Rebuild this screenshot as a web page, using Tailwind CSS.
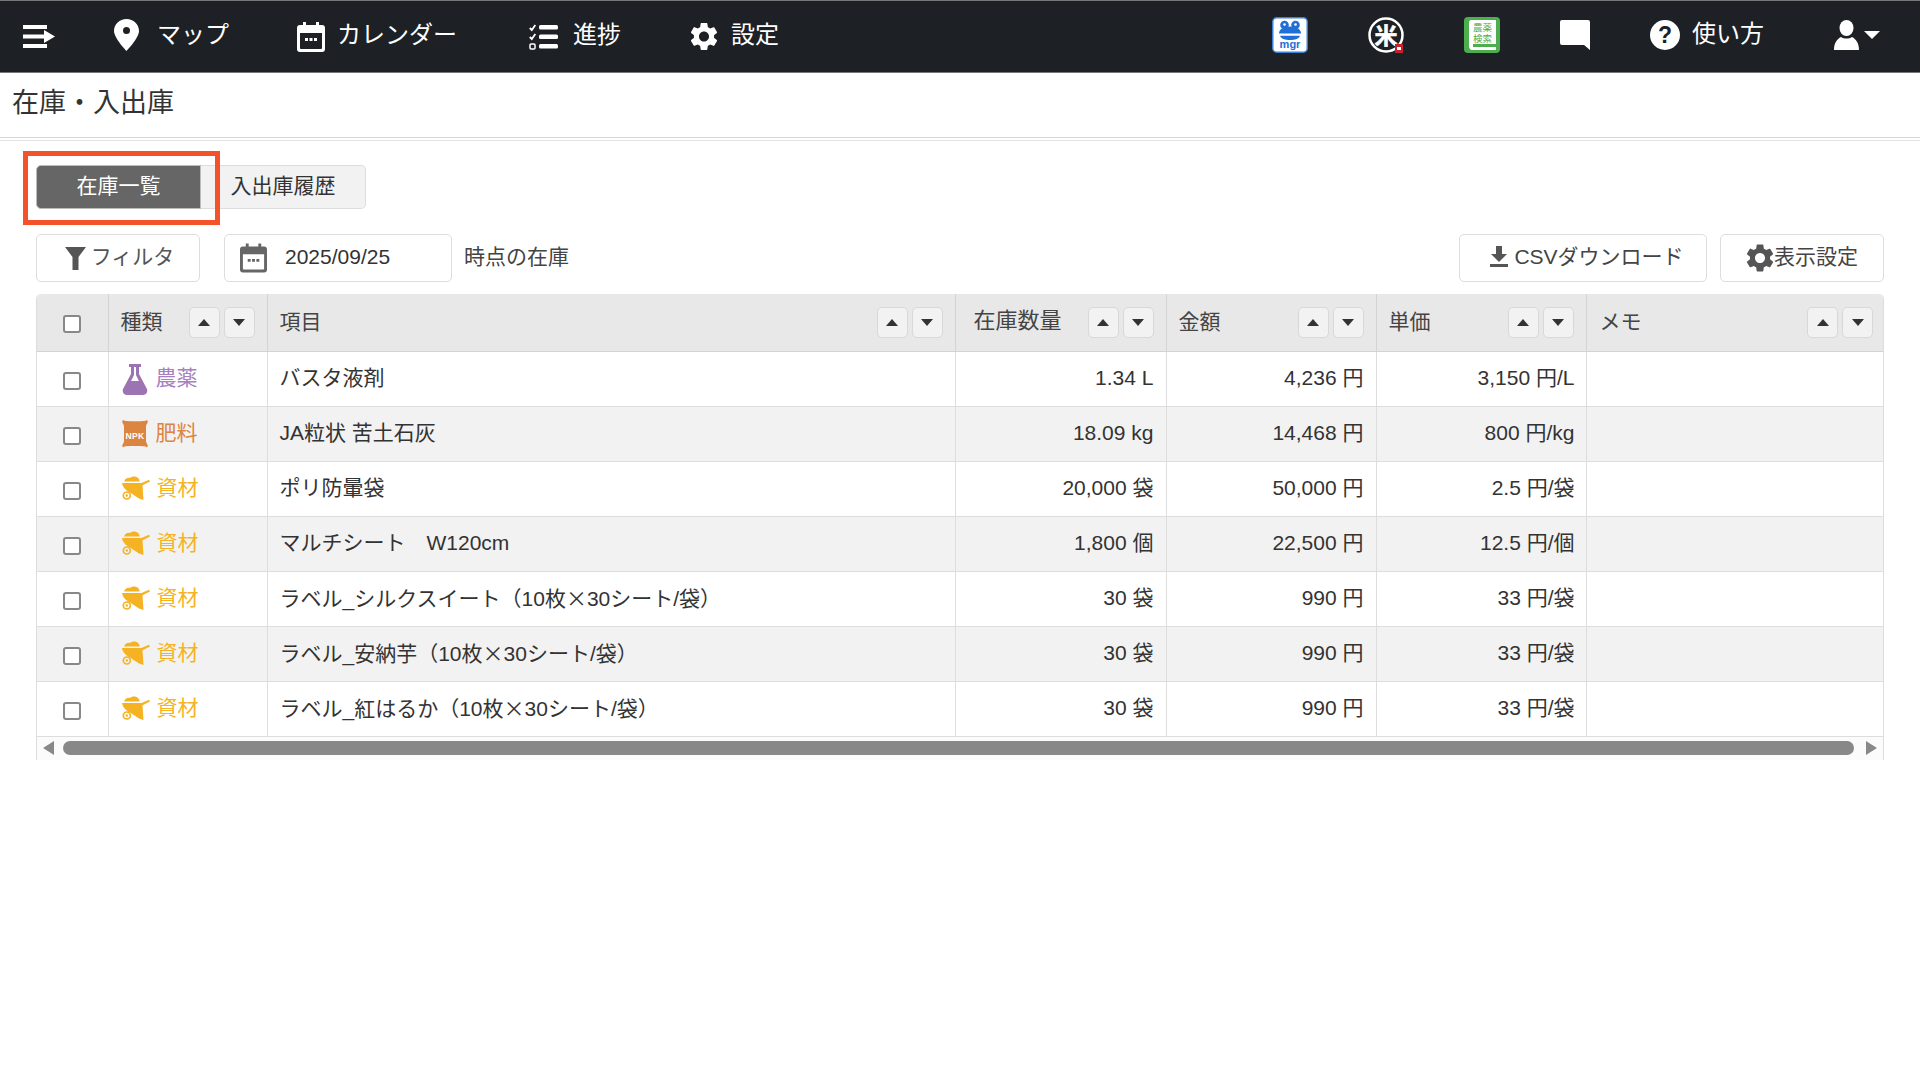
<!DOCTYPE html>
<html lang="ja">
<head>
<meta charset="utf-8">
<title>在庫・入出庫</title>
<script src="https://cdn.jsdelivr.net/npm/@tailwindcss/browser@4"></script>
</head>
<body class="relative w-[1920px] h-[1080px] overflow-hidden bg-white text-[#333] text-[21px] font-['Liberation_Sans','Noto_Sans_CJK_JP',sans-serif]">
<svg class="hidden">
  <symbol id="gear" viewBox="2 2 20 20"><path fill="currentColor" d="M19.14 12.94c.04-.3.06-.61.06-.94 0-.32-.02-.64-.07-.94l2.03-1.58c.18-.14.23-.41.12-.61l-1.92-3.32c-.12-.22-.37-.29-.59-.22l-2.39.96c-.5-.38-1.03-.7-1.62-.94l-.36-2.54c-.04-.24-.24-.41-.48-.41h-3.84c-.24 0-.43.17-.47.41l-.36 2.54c-.59.24-1.13.57-1.62.94l-2.39-.96c-.22-.08-.47 0-.59.22L2.74 8.87c-.12.21-.08.47.12.61l2.03 1.58c-.05.3-.09.63-.09.94s.02.64.07.94l-2.03 1.58c-.18.14-.23.41-.12.61l1.92 3.32c.12.22.37.29.59.22l2.39-.96c.5.38 1.03.7 1.62.94l.36 2.54c.05.24.24.41.48.41h3.84c.24 0 .44-.17.47-.41l.36-2.54c.59-.24 1.13-.56 1.62-.94l2.39.96c.22.08.47 0 .59-.22l1.92-3.32c.12-.22.07-.47-.12-.61l-2.01-1.58zM12 15.6c-1.98 0-3.6-1.62-3.6-3.6s1.62-3.6 3.6-3.6 3.6 1.62 3.6 3.6-1.62 3.6-3.6 3.6z"/></symbol>
  <symbol id="cal" viewBox="0 0 28 30"><path fill="currentColor" fill-rule="evenodd" d="M6 0h3v3h10V0h3v3h3a3 3 0 0 1 3 3v21a3 3 0 0 1-3 3H3a3 3 0 0 1-3-3V6a3 3 0 0 1 3-3h3zM3 11v15a1 1 0 0 0 1 1h20a1 1 0 0 0 1-1V11zM8 16h3v3H8zM12.500 16h3v3h-3zM17 16h3v3h-3z"/></symbol>
  <symbol id="wheel" viewBox="0 0 28 24"><path fill="currentColor" d="M2 5.500C3 2.500 6 1 8 2c2-2 6-2 8 0 1 1 1.500 2 1.500 3.500z"/><path fill="currentColor" d="M0 7h18.500l1 0L27 3.800l1 1.800-7.500 3.600L21.500 24 17 22.500 8 16.500C4 14.500 .5 11 0 7z"/><circle cx="4.800" cy="19.500" r="3.500" fill="none" stroke="currentColor" stroke-width="1.700"/><circle cx="4.800" cy="19.500" r="1.200" fill="currentColor"/></symbol>
  <symbol id="up" viewBox="0 0 12 7"><path fill="#333" d="M6 0l6 7H0z"/></symbol>
  <symbol id="down" viewBox="0 0 12 7"><path fill="#333" d="M0 0h12L6 7z"/></symbol>
</svg>

<header class="h-[73px] bg-[#1d2125] border-t border-b border-[#777] flex items-center text-white text-[24px] leading-none">
  <svg class="w-[32px] h-[23px] ml-[23px]" viewBox="0 0 32 23"><path fill="#fff" d="M0 0h24v4H0zM0 19h24v4H0z"/><path fill="#fff" d="M0 9.500h21V5l11 6.500L21 18v-4.500H0z"/></svg>
  <svg class="w-[25px] h-[32px] ml-[59px] mb-[4px]" viewBox="0 0 25 32"><path fill="#fff" fill-rule="evenodd" d="M12.500 0C5.600 0 0 5.400 0 12c0 7 12.500 20 12.500 20S25 19 25 12C25 5.400 19.400 0 12.500 0zm0 8a3.500 3.500 0 1 1 0 7 3.500 3.500 0 0 1 0-7z"/></svg>
  <span class="ml-[18px] mb-[4px]">マップ</span>
  <svg class="w-[28px] h-[30px] ml-[68px] text-white"><use href="#cal"/></svg>
  <span class="ml-[12px] mb-[4px]">カレンダー</span>
  <svg class="w-[29px] h-[26px] ml-[72px]" viewBox="0 0 29 26"><path fill="none" stroke="#fff" stroke-width="1.800" d="M.8 4l2 2 3.500-5M.8 13l2 2 3.500-5"/><rect x="1" y="20" width="5" height="5" rx="1" fill="none" stroke="#fff" stroke-width="1.500"/><rect x="10" y="1" width="19" height="4.500" rx="1.500" fill="#fff"/><rect x="10" y="10.500" width="19" height="4.500" rx="1.500" fill="#fff"/><rect x="10" y="20" width="19" height="4.500" rx="1.500" fill="#fff"/></svg>
  <span class="ml-[15px] mb-[4px]">進捗</span>
  <svg class="w-[28px] h-[29px] ml-[69px] text-white"><use href="#gear"/></svg>
  <span class="ml-[13px] mb-[4px]">設定</span>

  <div class="ml-auto flex items-center mb-[3px]">
    <svg class="w-[36px] h-[36px]" viewBox="0 0 36 36"><rect x=".75" y=".75" width="34.500" height="34.500" rx="4" fill="#fff" stroke="#3b82d6" stroke-width="1.500"/><circle cx="12.500" cy="8" r="4.300" fill="#1f6fd6"/><circle cx="23.500" cy="8" r="4.300" fill="#1f6fd6"/><circle cx="12.500" cy="7.500" r="1.300" fill="#fff"/><circle cx="23.500" cy="7.500" r="1.300" fill="#fff"/><path fill="#1f6fd6" d="M7 16.500c0-4 4-7 11-7s11 3 11 7z"/><path fill="#1f6fd6" d="M8 18.800h20c-1 3-5 4.200-10 4.200S9 21.800 8 18.800z"/><text x="18" y="30.500" font-size="11" font-weight="700" fill="#1f6fd6" text-anchor="middle" font-family="Liberation Sans">mgr</text></svg>
    <svg class="w-[36px] h-[36px] ml-[60px]" viewBox="0 0 36 36"><circle cx="18" cy="18" r="16.500" fill="#1d2125" stroke="#fff" stroke-width="2.500"/><text x="18" y="26.500" font-size="23" font-weight="700" fill="#fff" stroke="#fff" stroke-width=".5" text-anchor="middle" font-family="Noto Sans CJK JP">米</text><rect x="27" y="27" width="8" height="9" fill="#c3222f"/><rect x="29" y="30" width="4" height="3" fill="#fff"/></svg>
    <svg class="w-[36px] h-[36px] ml-[60px]" viewBox="0 0 36 36"><rect width="36" height="36" rx="4" fill="#4cae4f"/><path fill="#fff" d="M5 5c0-1 1-2 2-2h25v30H8c-2 0-3-2-3-4z"/><rect x="9" y="27" width="23" height="3" fill="#4cae4f"/><text x="18.500" y="13.500" font-size="9.500" fill="#4cae4f" text-anchor="middle" font-family="Noto Sans CJK JP">農薬</text><text x="18.500" y="25" font-size="9.500" fill="#4cae4f" text-anchor="middle" font-family="Noto Sans CJK JP">検索</text></svg>
    <svg class="w-[30px] h-[30px] ml-[60px]" viewBox="0 0 30 30"><path fill="#fff" d="M2 0h26a2 2 0 0 1 2 2v28l-6-5H2a2 2 0 0 1-2-2V2a2 2 0 0 1 2-2z"/></svg>
    <svg class="w-[30px] h-[30px] ml-[60px]" viewBox="0 0 30 30"><circle cx="15" cy="15" r="15" fill="#fff"/><text x="15" y="23" font-size="23" font-weight="700" fill="#1d2125" text-anchor="middle" font-family="Liberation Sans">?</text></svg>
    <span class="ml-[12px] mb-[2px]">使い方</span>
    <svg class="w-[25px] h-[30px] ml-[70px]" viewBox="0 0 25 30"><ellipse cx="12.500" cy="8" rx="7" ry="8" fill="#fff"/><path fill="#fff" d="M0 30c0-7 3-11 7-13 3 2 8 2 11 0 4 2 7 6 7 13z"/></svg>
    <svg class="w-[16px] h-[8px] ml-[5px] mr-[40px]" viewBox="0 0 16 8"><path fill="#fff" d="M0 0h16L8 8z"/></svg>
  </div>
</header>

<div class="h-[65px] pl-[12px] flex items-center text-[27px] leading-none border-b border-[#d8d8d8] pb-[4px]">在庫・入出庫</div>
<div class="mt-[2px] border-t border-[#e2e2e2]"></div>

<main class="px-[36px] pt-[24px]">
  <div class="flex h-[44px] w-[330px] text-[21px]">
    <div class="w-[165px] pb-[2px] bg-[#666] text-white rounded-l-[5px] border border-[#bbb] flex items-center justify-center">在庫一覧</div>
    <div class="flex-1 pb-[2px] bg-[#f2f2f2] rounded-r-[5px] border border-l-0 border-[#ddd] flex items-center justify-center">入出庫履歴</div>
  </div>

  <div class="flex items-center h-[48px] mt-[25px]">
    <div class="w-[164px] h-full bg-white border border-[#ddd] rounded-[5px] flex items-center justify-center">
      <svg class="w-[21px] h-[23px] ml-[3px]" viewBox="0 0 21 23"><path fill="#555" d="M0 0h21l-7.500 10v13h-6V10z"/></svg>
      <span class="text-[#555] ml-[5px] mb-[2px]">フィルタ</span>
    </div>
    <div class="w-[228px] h-full ml-[24px] bg-white border border-[#ddd] rounded-[5px] flex items-center">
      <svg class="w-[27px] h-[30px] ml-[15px] text-[#666]"><use href="#cal"/></svg>
      <span class="ml-[18px] mb-[2px]">2025/09/25</span>
    </div>
    <span class="ml-[12px] text-[#444] mb-[2px]">時点の在庫</span>
    <div class="ml-auto w-[248px] h-full bg-white border border-[#ddd] rounded-[5px] flex items-center justify-center text-[#444]">
      <svg class="w-[18px] h-[21px] ml-[8px] mb-[3px]" viewBox="0 0 18 21"><path fill="#555" d="M6 0h6v8h5l-8 8-8-8h5zM0 18h18v3H0z"/></svg>
      <span class="ml-[6px] mb-[2px]">CSVダウンロード</span>
    </div>
    <div class="ml-[13px] w-[164px] h-full bg-white border border-[#ddd] rounded-[5px] flex items-center justify-center text-[#444]">
      <svg class="w-[28px] h-[28px] text-[#555]"><use href="#gear"/></svg>
      <span class="mb-[2px]">表示設定</span>
    </div>
  </div>

  <div class="mt-[12px] border-l border-r border-[#ddd] rounded-t-[5px] overflow-hidden">
    <table class="w-[1846px] table-fixed border-collapse text-[21px] leading-none">
      <colgroup><col class="w-[71px]"><col class="w-[159px]"><col class="w-[688px]"><col class="w-[211px]"><col class="w-[210px]"><col class="w-[210px]"><col class="w-[297px]"></colgroup>
      <thead>
        <tr class="h-[57px] bg-[#e8e8e8] text-[#444]">
          <th class="border-r border-b border-[#d4d4d4] font-normal"><span class="block w-[18px] h-[18px] mx-auto mt-[4px] bg-white border-2 border-[#888] rounded-[3px]"></span></th>
          <th class="border border-t-0 border-[#d4d4d4] font-normal px-[12px]"><div class="flex items-center justify-between"><span class="mb-[2px]">種類</span><div class="flex gap-[4px]"><span class="w-[31px] h-[31px] bg-[#f2f2f2] border border-[#d8d8d8] rounded-[5px] flex items-center justify-center"><svg class="w-[12px] h-[7px]"><use href="#up"/></svg></span><span class="w-[31px] h-[31px] bg-[#f2f2f2] border border-[#d8d8d8] rounded-[5px] flex items-center justify-center"><svg class="w-[12px] h-[7px]"><use href="#down"/></svg></span></div></div></th>
          <th class="border border-t-0 border-[#d4d4d4] font-normal px-[12px]"><div class="flex items-center justify-between"><span class="mb-[2px]">項目</span><div class="flex gap-[4px]"><span class="w-[31px] h-[31px] bg-[#f2f2f2] border border-[#d8d8d8] rounded-[5px] flex items-center justify-center"><svg class="w-[12px] h-[7px]"><use href="#up"/></svg></span><span class="w-[31px] h-[31px] bg-[#f2f2f2] border border-[#d8d8d8] rounded-[5px] flex items-center justify-center"><svg class="w-[12px] h-[7px]"><use href="#down"/></svg></span></div></div></th>
          <th class="border border-t-0 border-[#d4d4d4] font-normal pl-[18px] pr-[12px]"><div class="flex items-center justify-between"><span class="mb-[2px] text-[22px]">在庫数量</span><div class="flex gap-[4px]"><span class="w-[31px] h-[31px] bg-[#f2f2f2] border border-[#d8d8d8] rounded-[5px] flex items-center justify-center"><svg class="w-[12px] h-[7px]"><use href="#up"/></svg></span><span class="w-[31px] h-[31px] bg-[#f2f2f2] border border-[#d8d8d8] rounded-[5px] flex items-center justify-center"><svg class="w-[12px] h-[7px]"><use href="#down"/></svg></span></div></div></th>
          <th class="border border-t-0 border-[#d4d4d4] font-normal px-[12px]"><div class="flex items-center justify-between"><span class="mb-[2px]">金額</span><div class="flex gap-[4px]"><span class="w-[31px] h-[31px] bg-[#f2f2f2] border border-[#d8d8d8] rounded-[5px] flex items-center justify-center"><svg class="w-[12px] h-[7px]"><use href="#up"/></svg></span><span class="w-[31px] h-[31px] bg-[#f2f2f2] border border-[#d8d8d8] rounded-[5px] flex items-center justify-center"><svg class="w-[12px] h-[7px]"><use href="#down"/></svg></span></div></div></th>
          <th class="border border-t-0 border-[#d4d4d4] font-normal px-[12px]"><div class="flex items-center justify-between"><span class="mb-[2px]">単価</span><div class="flex gap-[4px]"><span class="w-[31px] h-[31px] bg-[#f2f2f2] border border-[#d8d8d8] rounded-[5px] flex items-center justify-center"><svg class="w-[12px] h-[7px]"><use href="#up"/></svg></span><span class="w-[31px] h-[31px] bg-[#f2f2f2] border border-[#d8d8d8] rounded-[5px] flex items-center justify-center"><svg class="w-[12px] h-[7px]"><use href="#down"/></svg></span></div></div></th>
          <th class="border-l border-b border-[#d4d4d4] font-normal pl-[13px] pr-[10px]"><div class="flex items-center justify-between"><span class="mb-[2px]">メモ</span><div class="flex gap-[4px]"><span class="w-[31px] h-[31px] bg-[#f2f2f2] border border-[#d8d8d8] rounded-[5px] flex items-center justify-center"><svg class="w-[12px] h-[7px]"><use href="#up"/></svg></span><span class="w-[31px] h-[31px] bg-[#f2f2f2] border border-[#d8d8d8] rounded-[5px] flex items-center justify-center"><svg class="w-[12px] h-[7px]"><use href="#down"/></svg></span></div></div></th>
        </tr>
      </thead>
      <tbody class="[&_td]:pb-[2px]">
        <tr class="h-[55px] bg-white">
          <td class="border-r border-b border-[#ddd]"><span class="block w-[18px] h-[18px] mx-auto mt-[6px] bg-white border-2 border-[#888] rounded-[3px]"></span></td>
          <td class="border border-[#ddd] px-[13px]"><div class="flex items-center text-[#a87fbf]"><svg class="w-[26px] h-[31px] mt-[4px]" viewBox="0 0 26 31"><path fill="#9c73b3" fill-rule="evenodd" d="M7 0h12v3h-2v7l8 15c1 3-1 6-4 6H5c-3 0-5-3-4-6l8-15V3H7zm5 3v8l-3 6h8l-3-6V3z"/></svg><span class="ml-[8px]">農薬</span></div></td>
          <td class="border border-[#ddd] px-[12px]">バスタ液剤</td>
          <td class="border border-[#ddd] px-[12px] text-right">1.34 L</td>
          <td class="border border-[#ddd] px-[12px] text-right">4,236 円</td>
          <td class="border border-[#ddd] pl-[12px] pr-[11px] text-right">3,150 円/L</td>
          <td class="border-l border-b border-[#ddd]"></td>
        </tr>
        <tr class="h-[55px] bg-[#f2f2f2]">
          <td class="border-r border-b border-[#ddd]"><span class="block w-[18px] h-[18px] mx-auto mt-[6px] bg-white border-2 border-[#888] rounded-[3px]"></span></td>
          <td class="border border-[#ddd] px-[13px]"><div class="flex items-center text-[#dc8540]"><svg class="w-[26px] h-[30px] mt-[4px]" viewBox="0 0 26 30"><path fill="#dc8540" d="M1 0c1 .7 2 1 3 1 6 .6 12 .6 18 0 1 0 2-.3 3-1 1 .5 1 3 0 4-.7 1-1 2-1 3v16c0 1 .3 2 1 3 1 1 1 3.500 0 4-1-.7-2-1-3-1-6-.6-12-.6-18 0-1 0-2 .3-3 1-1-.5-1-3 0-4 .7-1 1-2 1-3V7c0-1-.3-2-1-3C0 3 0 .5 1 0z" transform="scale(1 .909)"/><text x="13" y="18.500" font-size="8.500" font-weight="700" letter-spacing=".4" fill="#fff" text-anchor="middle" font-family="Liberation Sans">NPK</text></svg><span class="ml-[8px]">肥料</span></div></td>
          <td class="border border-[#ddd] px-[12px]">JA粒状 苦土石灰</td>
          <td class="border border-[#ddd] px-[12px] text-right">18.09 kg</td>
          <td class="border border-[#ddd] px-[12px] text-right">14,468 円</td>
          <td class="border border-[#ddd] pl-[12px] pr-[11px] text-right">800 円/kg</td>
          <td class="border-l border-b border-[#ddd]"></td>
        </tr>
        <tr class="h-[55px] bg-white">
          <td class="border-r border-b border-[#ddd]"><span class="block w-[18px] h-[18px] mx-auto mt-[6px] bg-white border-2 border-[#888] rounded-[3px]"></span></td>
          <td class="border border-[#ddd] px-[13px]"><div class="flex items-center text-[#f5b223]"><svg class="w-[28px] h-[24px]"><use href="#wheel"/></svg><span class="ml-[7px]">資材</span></div></td>
          <td class="border border-[#ddd] px-[12px]">ポリ防暈袋</td>
          <td class="border border-[#ddd] px-[12px] text-right">20,000 袋</td>
          <td class="border border-[#ddd] px-[12px] text-right">50,000 円</td>
          <td class="border border-[#ddd] pl-[12px] pr-[11px] text-right">2.5 円/袋</td>
          <td class="border-l border-b border-[#ddd]"></td>
        </tr>
        <tr class="h-[55px] bg-[#f2f2f2]">
          <td class="border-r border-b border-[#ddd]"><span class="block w-[18px] h-[18px] mx-auto mt-[6px] bg-white border-2 border-[#888] rounded-[3px]"></span></td>
          <td class="border border-[#ddd] px-[13px]"><div class="flex items-center text-[#f5b223]"><svg class="w-[28px] h-[24px]"><use href="#wheel"/></svg><span class="ml-[7px]">資材</span></div></td>
          <td class="border border-[#ddd] px-[12px]">マルチシート　W120cm</td>
          <td class="border border-[#ddd] px-[12px] text-right">1,800 個</td>
          <td class="border border-[#ddd] px-[12px] text-right">22,500 円</td>
          <td class="border border-[#ddd] pl-[12px] pr-[11px] text-right">12.5 円/個</td>
          <td class="border-l border-b border-[#ddd]"></td>
        </tr>
        <tr class="h-[55px] bg-white">
          <td class="border-r border-b border-[#ddd]"><span class="block w-[18px] h-[18px] mx-auto mt-[6px] bg-white border-2 border-[#888] rounded-[3px]"></span></td>
          <td class="border border-[#ddd] px-[13px]"><div class="flex items-center text-[#f5b223]"><svg class="w-[28px] h-[24px]"><use href="#wheel"/></svg><span class="ml-[7px]">資材</span></div></td>
          <td class="border border-[#ddd] px-[12px]">ラベル_シルクスイート（10枚<span class="font-['Noto_Sans_CJK_JP']">×</span>30シート/袋）</td>
          <td class="border border-[#ddd] px-[12px] text-right">30 袋</td>
          <td class="border border-[#ddd] px-[12px] text-right">990 円</td>
          <td class="border border-[#ddd] pl-[12px] pr-[11px] text-right">33 円/袋</td>
          <td class="border-l border-b border-[#ddd]"></td>
        </tr>
        <tr class="h-[55px] bg-[#f2f2f2]">
          <td class="border-r border-b border-[#ddd]"><span class="block w-[18px] h-[18px] mx-auto mt-[6px] bg-white border-2 border-[#888] rounded-[3px]"></span></td>
          <td class="border border-[#ddd] px-[13px]"><div class="flex items-center text-[#f5b223]"><svg class="w-[28px] h-[24px]"><use href="#wheel"/></svg><span class="ml-[7px]">資材</span></div></td>
          <td class="border border-[#ddd] px-[12px]">ラベル_安納芋（10枚<span class="font-['Noto_Sans_CJK_JP']">×</span>30シート/袋）</td>
          <td class="border border-[#ddd] px-[12px] text-right">30 袋</td>
          <td class="border border-[#ddd] px-[12px] text-right">990 円</td>
          <td class="border border-[#ddd] pl-[12px] pr-[11px] text-right">33 円/袋</td>
          <td class="border-l border-b border-[#ddd]"></td>
        </tr>
        <tr class="h-[55px] bg-white">
          <td class="border-r border-b border-[#ddd]"><span class="block w-[18px] h-[18px] mx-auto mt-[6px] bg-white border-2 border-[#888] rounded-[3px]"></span></td>
          <td class="border border-[#ddd] px-[13px]"><div class="flex items-center text-[#f5b223]"><svg class="w-[28px] h-[24px]"><use href="#wheel"/></svg><span class="ml-[7px]">資材</span></div></td>
          <td class="border border-[#ddd] px-[12px]">ラベル_紅はるか（10枚<span class="font-['Noto_Sans_CJK_JP']">×</span>30シート/袋）</td>
          <td class="border border-[#ddd] px-[12px] text-right">30 袋</td>
          <td class="border border-[#ddd] px-[12px] text-right">990 円</td>
          <td class="border border-[#ddd] pl-[12px] pr-[11px] text-right">33 円/袋</td>
          <td class="border-l border-b border-[#ddd]"></td>
        </tr>
      </tbody>
    </table>
    <div class="h-[23px] bg-[#fbfbfb] flex items-center pl-[6px] pr-[6px]">
      <svg class="w-[11px] h-[14px] shrink-0" viewBox="0 0 11 14"><path fill="#888" d="M11 0v14L0 7z"/></svg>
      <div class="h-[14px] flex-1 ml-[9px] mr-[12px] bg-[#888] rounded-full"></div>
      <svg class="w-[11px] h-[14px] shrink-0" viewBox="0 0 11 14"><path fill="#888" d="M0 0v14l11-7z"/></svg>
    </div>
  </div>
</main>

<div class="absolute left-[23px] top-[151px] w-[197px] h-[74px] border-[5px] border-[#f4522a]"></div>
</body>
</html>
